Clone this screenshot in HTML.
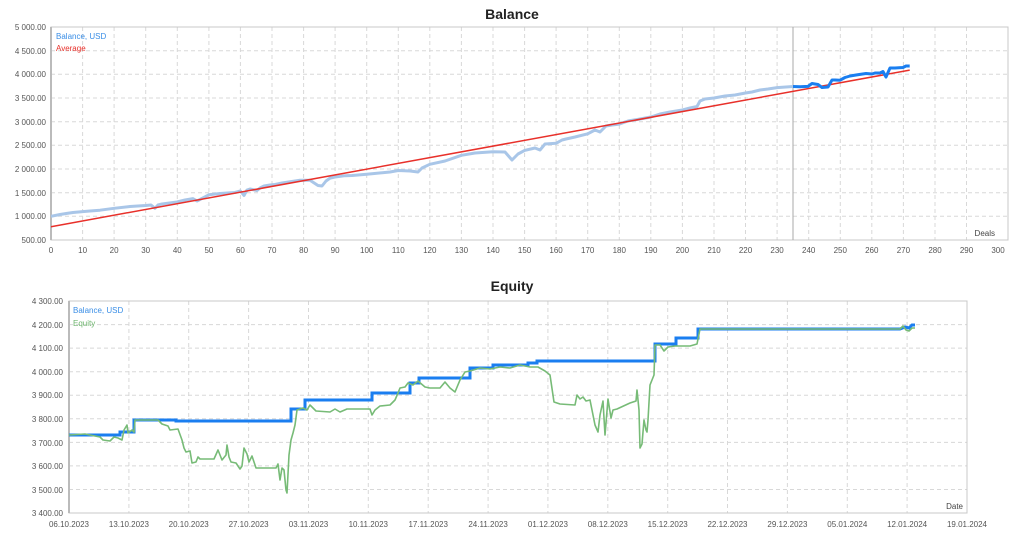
<!DOCTYPE html>
<html><head><meta charset="utf-8"><style>
html,body{margin:0;padding:0;background:#fff;width:1024px;height:537px;overflow:hidden}
svg text{font-family:"Liberation Sans",Arial,sans-serif;}
</style></head><body>
<svg width="1024" height="537" viewBox="0 0 1024 537" xmlns="http://www.w3.org/2000/svg">
<!-- ===== Balance chart ===== -->
<text x="512" y="19" text-anchor="middle" font-size="14" font-weight="bold" fill="#222">Balance</text>
<g stroke="#d8d8d8" stroke-width="1" stroke-dasharray="4,3">
<line x1="51" y1="50.7" x2="1008" y2="50.7"/><line x1="51" y1="74.3" x2="1008" y2="74.3"/><line x1="51" y1="98" x2="1008" y2="98"/><line x1="51" y1="121.7" x2="1008" y2="121.7"/><line x1="51" y1="145.3" x2="1008" y2="145.3"/><line x1="51" y1="169" x2="1008" y2="169"/><line x1="51" y1="192.7" x2="1008" y2="192.7"/><line x1="51" y1="216.3" x2="1008" y2="216.3"/>
<line x1="82.6" y1="27" x2="82.6" y2="240"/><line x1="114.1" y1="27" x2="114.1" y2="240"/><line x1="145.7" y1="27" x2="145.7" y2="240"/><line x1="177.3" y1="27" x2="177.3" y2="240"/><line x1="208.9" y1="27" x2="208.9" y2="240"/><line x1="240.4" y1="27" x2="240.4" y2="240"/><line x1="272" y1="27" x2="272" y2="240"/><line x1="303.6" y1="27" x2="303.6" y2="240"/><line x1="335.1" y1="27" x2="335.1" y2="240"/><line x1="366.7" y1="27" x2="366.7" y2="240"/><line x1="398.3" y1="27" x2="398.3" y2="240"/><line x1="429.8" y1="27" x2="429.8" y2="240"/><line x1="461.4" y1="27" x2="461.4" y2="240"/><line x1="493" y1="27" x2="493" y2="240"/><line x1="524.6" y1="27" x2="524.6" y2="240"/><line x1="556.1" y1="27" x2="556.1" y2="240"/><line x1="587.7" y1="27" x2="587.7" y2="240"/><line x1="619.3" y1="27" x2="619.3" y2="240"/><line x1="650.8" y1="27" x2="650.8" y2="240"/><line x1="682.4" y1="27" x2="682.4" y2="240"/><line x1="714" y1="27" x2="714" y2="240"/><line x1="745.5" y1="27" x2="745.5" y2="240"/><line x1="777.1" y1="27" x2="777.1" y2="240"/><line x1="808.7" y1="27" x2="808.7" y2="240"/><line x1="840.3" y1="27" x2="840.3" y2="240"/><line x1="871.8" y1="27" x2="871.8" y2="240"/><line x1="903.4" y1="27" x2="903.4" y2="240"/><line x1="935" y1="27" x2="935" y2="240"/><line x1="966.5" y1="27" x2="966.5" y2="240"/>
</g>
<rect x="51" y="27" width="957" height="213" fill="none" stroke="#c8c8c8"/>
<line x1="51" y1="27" x2="51" y2="240" stroke="#bbb" stroke-width="2"/>
<line x1="793" y1="27" x2="793" y2="240" stroke="#aaa"/>
<g font-size="8" fill="#555" text-anchor="end">
<text x="46" y="30">5 000.00</text><text x="46" y="54">4 500.00</text><text x="46" y="77">4 000.00</text><text x="46" y="101">3 500.00</text><text x="46" y="125">3 000.00</text><text x="46" y="148">2 500.00</text><text x="46" y="172">2 000.00</text><text x="46" y="196">1 500.00</text><text x="46" y="219">1 000.00</text><text x="46" y="243">500.00</text>
</g>
<g font-size="8" fill="#555" text-anchor="middle">
<text x="51" y="253">0</text><text x="82.6" y="253">10</text><text x="114.1" y="253">20</text><text x="145.7" y="253">30</text><text x="177.3" y="253">40</text><text x="208.9" y="253">50</text><text x="240.4" y="253">60</text><text x="272" y="253">70</text><text x="303.6" y="253">80</text><text x="335.1" y="253">90</text><text x="366.7" y="253">100</text><text x="398.3" y="253">110</text><text x="429.8" y="253">120</text><text x="461.4" y="253">130</text><text x="493" y="253">140</text><text x="524.6" y="253">150</text><text x="556.1" y="253">160</text><text x="587.7" y="253">170</text><text x="619.3" y="253">180</text><text x="650.8" y="253">190</text><text x="682.4" y="253">200</text><text x="714" y="253">210</text><text x="745.5" y="253">220</text><text x="777.1" y="253">230</text><text x="808.7" y="253">240</text><text x="840.3" y="253">250</text><text x="871.8" y="253">260</text><text x="903.4" y="253">270</text><text x="935" y="253">280</text><text x="966.5" y="253">290</text><text x="998" y="253">300</text>
</g>
<text x="995" y="236" font-size="8" fill="#444" text-anchor="end">Deals</text>
<text x="56" y="39" font-size="8" fill="#3a8ee6">Balance, USD</text>
<text x="56" y="51" font-size="8" fill="#e8302a">Average</text>
<polyline fill="none" stroke="#a9c6e8" stroke-width="3" stroke-linejoin="round" points="51,216.3 60,214.5 67,213.4 73,212.5 82.6,211.6 90,211 100,210.2 114.1,208.3 130,206.5 145.7,205.5 151,205 155,208.3 158,205 162,204 177,202 185,200 193,198.6 197,201 199,200 208.9,194.8 220,193.5 235,192.5 240.4,191 244,195.5 247,190 250,189 257,190.5 260,188 264,186 270,185 275,184.5 282,183 300,180.2 310,180.2 318,185.5 322,186 326,181 330,178.1 335,177 345,175.7 352,175.5 366.7,174.2 390,172 398.3,170.5 410,171 418,172 422,168 429.8,164.3 445,161 461.4,155.3 475,153 493,151.8 505,152 512,160 518,154 524.6,150.4 535,148 540,150 545,144 556.1,143.3 562,140 566,139 575,137 587.7,133.8 595,130 600,132 606,126 612,125 619.3,124.1 625,122 628,121 640,119 650.8,117 660,114 670,112 682.4,110 690,108 697,106.5 700,101 705,99 714,98 725,96 735,95 745.5,93 752,92 760,90 768,89 777.1,87.6 793,86.5"/>
<line x1="51" y1="226.7" x2="909.7" y2="70.1" stroke="#e8302a" stroke-width="1.5"/>
<polyline fill="none" stroke="#1a7ef0" stroke-width="3" stroke-linejoin="round" points="793,86.5 800,86.7 808,86.4 812,83.5 818,84.5 822,87.5 828,87 832,80 835,80 840,80.2 845,77.5 850,76 856,75 866,73.5 872,74 875,73 880,73 883,71.5 886,77 890,68 895,68 903,67.5 906,66 909.7,66"/>

<!-- ===== Equity chart ===== -->
<text x="512" y="291" text-anchor="middle" font-size="14" font-weight="bold" fill="#222">Equity</text>
<g stroke="#d8d8d8" stroke-width="1" stroke-dasharray="4,3">
<line x1="69" y1="324.6" x2="967" y2="324.6"/><line x1="69" y1="348.1" x2="967" y2="348.1"/><line x1="69" y1="371.7" x2="967" y2="371.7"/><line x1="69" y1="395.2" x2="967" y2="395.2"/><line x1="69" y1="418.8" x2="967" y2="418.8"/><line x1="69" y1="442.4" x2="967" y2="442.4"/><line x1="69" y1="465.9" x2="967" y2="465.9"/><line x1="69" y1="489.5" x2="967" y2="489.5"/>
<line x1="128.9" y1="301" x2="128.9" y2="513"/><line x1="188.7" y1="301" x2="188.7" y2="513"/><line x1="248.6" y1="301" x2="248.6" y2="513"/><line x1="308.5" y1="301" x2="308.5" y2="513"/><line x1="368.3" y1="301" x2="368.3" y2="513"/><line x1="428.2" y1="301" x2="428.2" y2="513"/><line x1="488.1" y1="301" x2="488.1" y2="513"/><line x1="547.9" y1="301" x2="547.9" y2="513"/><line x1="607.8" y1="301" x2="607.8" y2="513"/><line x1="667.7" y1="301" x2="667.7" y2="513"/><line x1="727.5" y1="301" x2="727.5" y2="513"/><line x1="787.4" y1="301" x2="787.4" y2="513"/><line x1="847.3" y1="301" x2="847.3" y2="513"/><line x1="907.1" y1="301" x2="907.1" y2="513"/>
</g>
<rect x="69" y="301" width="898" height="212" fill="none" stroke="#c8c8c8"/>
<line x1="69" y1="301" x2="69" y2="513" stroke="#bbb" stroke-width="2"/>
<g font-size="8" fill="#555" text-anchor="end">
<text x="63" y="304">4 300.00</text><text x="63" y="328">4 200.00</text><text x="63" y="351">4 100.00</text><text x="63" y="375">4 000.00</text><text x="63" y="398">3 900.00</text><text x="63" y="422">3 800.00</text><text x="63" y="446">3 700.00</text><text x="63" y="469">3 600.00</text><text x="63" y="493">3 500.00</text><text x="63" y="516">3 400.00</text>
</g>
<g font-size="8" fill="#555" text-anchor="middle">
<text x="69" y="527">06.10.2023</text><text x="128.9" y="527">13.10.2023</text><text x="188.7" y="527">20.10.2023</text><text x="248.6" y="527">27.10.2023</text><text x="308.5" y="527">03.11.2023</text><text x="368.3" y="527">10.11.2023</text><text x="428.2" y="527">17.11.2023</text><text x="488.1" y="527">24.11.2023</text><text x="547.9" y="527">01.12.2023</text><text x="607.8" y="527">08.12.2023</text><text x="667.7" y="527">15.12.2023</text><text x="727.5" y="527">22.12.2023</text><text x="787.4" y="527">29.12.2023</text><text x="847.3" y="527">05.01.2024</text><text x="907.1" y="527">12.01.2024</text><text x="967" y="527">19.01.2024</text>
</g>
<text x="963" y="509" font-size="8" fill="#444" text-anchor="end">Date</text>
<text x="73" y="313" font-size="8" fill="#3a8ee6">Balance, USD</text>
<text x="73" y="326" font-size="8" fill="#6fb66f">Equity</text>
<polyline fill="none" stroke="#1a7ef0" stroke-width="3" points="69,435 120,435 120,432 134,432 134,420 176,420 176,421 291,421 291,409 305,409 305,400 372,400 372,393 410,393 410,383 419,383 419,378 470,378 470,368 493,368 493,365 528,365 528,363 537,363 537,361 655,361 655,344 676,344 676,338 698,338 698,329 900,329 905,327 909,328 912,325 915,325"/>
<polyline fill="none" stroke="#77bb77" stroke-width="1.6" stroke-linejoin="round" points="69,435 85,434 100,437 103,440 110,441 114,437 118,438 122,440 124,430 127,425 128,433 132,430 134,432 135,420 158,420 162,424 168,426 170,430 178,429 182,440 184,448 186,452 190,451 192,463 196,462 198,457 200,459 214,459 218,450 222,460 226,455 227,445 229,457 231,462 236,463 240,469 242,466 244,448 247,454 249,462 252,456 256,468 276,468 278,464 280,480 282,468 284,470 286,490 287,493 289,455 291,440 293,433 295,425 297,410 303,408 307,410 310,405 313,408 316,411 330,412 335,409 340,412 347,409 370,409 372,415 375,410 380,406 390,405 395,400 398,393 400,388 405,387 408,383 413,385 418,381 425,387 430,388 440,388 445,382 450,388 455,392 460,380 465,372 470,371 480,368 490,369 500,367 510,368 520,365 530,367 538,367 545,371 550,375 554,402 560,404 575,405 577,395 580,399 583,397 586,401 590,400 595,425 598,432 600,415 603,401 605,435 608,399 611,418 613,410 617,409 630,403 636,401 637,390 639,410 640,448 642,444 644,420 646,430 647,432 648,420 650,385 652,380 654,375 655,345 660,345 664,351 668,347 675,346 690,346 697,344 700,329 900,329 903,326 906,330 909,331 912,328 915,328"/>
</svg>
</body></html>
